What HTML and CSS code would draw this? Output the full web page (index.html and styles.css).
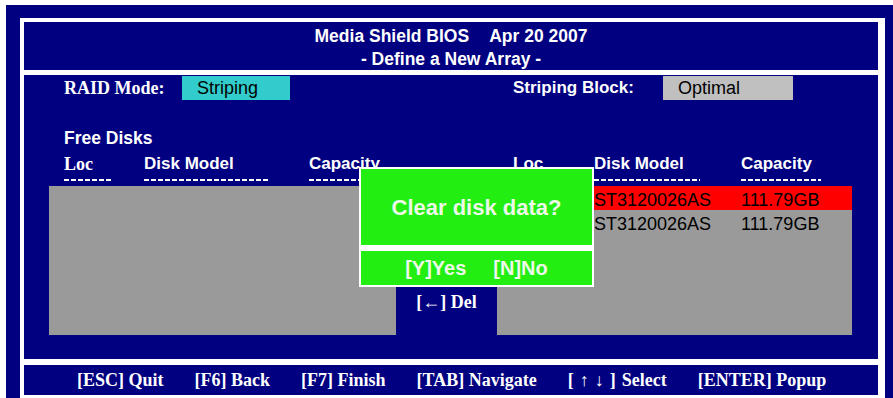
FILE: index.html
```html
<!DOCTYPE html>
<html lang="en">
<head>
  <meta charset="UTF-8">
  <meta name="viewport" content="width=device-width, initial-scale=1.0">
  <title>Media Shield BIOS - Define a New Array</title>
  <link rel="stylesheet" href="styles.css">
</head>
<body>
<div class="screen">
  <div class="frame">
    <div class="panel header">
      <div>Media Shield BIOS<span class="date">Apr 20 2007</span></div>
      <div>- Define a New Array -</div>
    </div>

    <div class="panel main">
      <div class="mode-row">
        <span class="serif raid-label">RAID Mode:</span>
        <span class="field cyan">Striping</span>
        <span class="block-label">Striping Block:</span>
        <span class="field grey">Optimal</span>
      </div>

      <div class="free-title">Free Disks</div>

      <div class="col-heads">
        <div class="head"><span class="serif">Loc</span><i class="dash" style="width:49px"></i></div>
        <div class="head"><span>Disk Model</span><i class="dash" style="width:124px"></i></div>
        <div class="head"><span>Capacity</span><i class="dash" style="width:80px"></i></div>
        <div class="head"><span>Loc</span><i class="dash" style="width:40px"></i></div>
        <div class="head"><span>Disk Model</span><i class="dash" style="width:106px"></i></div>
        <div class="head"><span>Capacity</span><i class="dash" style="width:80px"></i></div>
      </div>

      <div class="lists">
        <div class="list left-list"></div>
        <div class="del-col"><span class="serif">[&larr;] Del</span></div>
        <div class="list right-list">
          <div class="disk-row selected"><span>ST3120026AS</span><span>111.79GB</span></div>
          <div class="disk-row"><span>ST3120026AS</span><span>111.79GB</span></div>
        </div>
      </div>

      <div class="dialog">
        <div class="dialog-msg">Clear disk data?</div>
        <div class="dialog-keys"><span>[Y]Yes</span><span>[N]No</span></div>
      </div>
    </div>

    <div class="panel footer">
      <span>[ESC] Quit</span>
      <span>[F6] Back</span>
      <span>[F7] Finish</span>
      <span>[TAB] Navigate</span>
      <span class="sel">[ &uarr; &darr; ] Select</span>
      <span>[ENTER] Popup</span>
    </div>
  </div>
</div>
</body>
</html>
```

FILE: styles.css
```css
body {
  margin: 0;
  background: #fff;
  overflow: hidden;
  font-family: "Liberation Sans", Arial, sans-serif;
  color: #fff;
}
.screen {
  margin: 5px 0 0 6px;
  padding: 13px 8px 0 14px;
  background: #000080;
  height: 400px;
}
.frame {
  background: #fff;
  padding: 4px 7px 10px 4px;
  display: flex;
  flex-direction: column;
}
.panel {
  background: #000080;
}
.serif {
  font-family: "Liberation Serif", "Times New Roman", serif;
  font-weight: bold;
  font-size: 18px;
}

/* header */
.header {
  height: 48px;
  padding-top: 3px;
  box-sizing: border-box;
  text-align: center;
  font-weight: bold;
  font-size: 17.5px;
  line-height: 23px;
}
.date {
  margin-left: 20px;
}

/* main area */
.main {
  margin-top: 5px;
  height: 284px;
  position: relative;
  padding-top: 1px;
  box-sizing: border-box;
}
.mode-row {
  display: flex;
  align-items: center;
  height: 24px;
}
.raid-label {
  margin-left: 40px;
  width: 118px;
}
.field {
  height: 24px;
  line-height: 24px;
  padding-left: 15px;
  box-sizing: border-box;
  color: #000;
  font-size: 18px;
}
.cyan {
  width: 108px;
  background: #33cccc;
}
.grey {
  width: 130px;
  background: #c0c0c0;
}
.block-label {
  margin-left: 223px;
  width: 150px;
  font-weight: bold;
  font-size: 17px;
}
.free-title {
  margin: 28px 0 0 40px;
  font-weight: bold;
  font-size: 17.5px;
  line-height: 20px;
}
.col-heads {
  display: grid;
  grid-template-columns: 80px 165px 204px 81px 147px 1fr;
  padding-left: 40px;
  margin-top: 6px;
  font-weight: bold;
  font-size: 17px;
  line-height: 20px;
}
.head {
  display: flex;
  flex-direction: column;
}
.dash {
  display: block;
  height: 2px;
  margin-top: 5px;
  background: repeating-linear-gradient(90deg, #fff 0 5px, transparent 5px 7px);
}
.lists {
  display: flex;
  margin: 5px 0 0 25px;
  height: 149px;
}
.list {
  background: #9a9a9a;
}
.left-list {
  width: 347px;
}
.del-col {
  width: 101px;
  padding-top: 105px;
  box-sizing: border-box;
  text-align: center;
  line-height: 22px;
}
.right-list {
  width: 355px;
}
.disk-row {
  display: grid;
  grid-template-columns: 147px 1fr;
  padding-left: 97px;
  height: 24px;
  line-height: 28px;
  color: #000;
  font-size: 18px;
}
.disk-row.selected {
  background: #ff0000;
}

/* popup */
.dialog {
  position: absolute;
  left: 335px;
  top: 92px;
  width: 235px;
  border: 2px solid #fff;
  background: #fff;
  box-sizing: border-box;
  display: flex;
  flex-direction: column;
  gap: 6px;
  font-weight: bold;
  color: #eef8e8;
}
.dialog-msg {
  height: 76px;
  background: #22ee11;
  font-size: 22px;
  line-height: 78px;
  text-align: center;
}
.dialog-keys {
  height: 34px;
  background: #22ee11;
  display: flex;
  justify-content: center;
  gap: 27px;
  font-size: 20px;
  line-height: 34px;
}

/* footer */
.footer {
  margin-top: 6px;
  height: 30px;
  display: flex;
  align-items: center;
  gap: 31px;
  padding-left: 53px;
  font-family: "Liberation Serif", "Times New Roman", serif;
  font-weight: bold;
  font-size: 18px;
}
.footer .sel {
  word-spacing: 1.5px;
}
```
